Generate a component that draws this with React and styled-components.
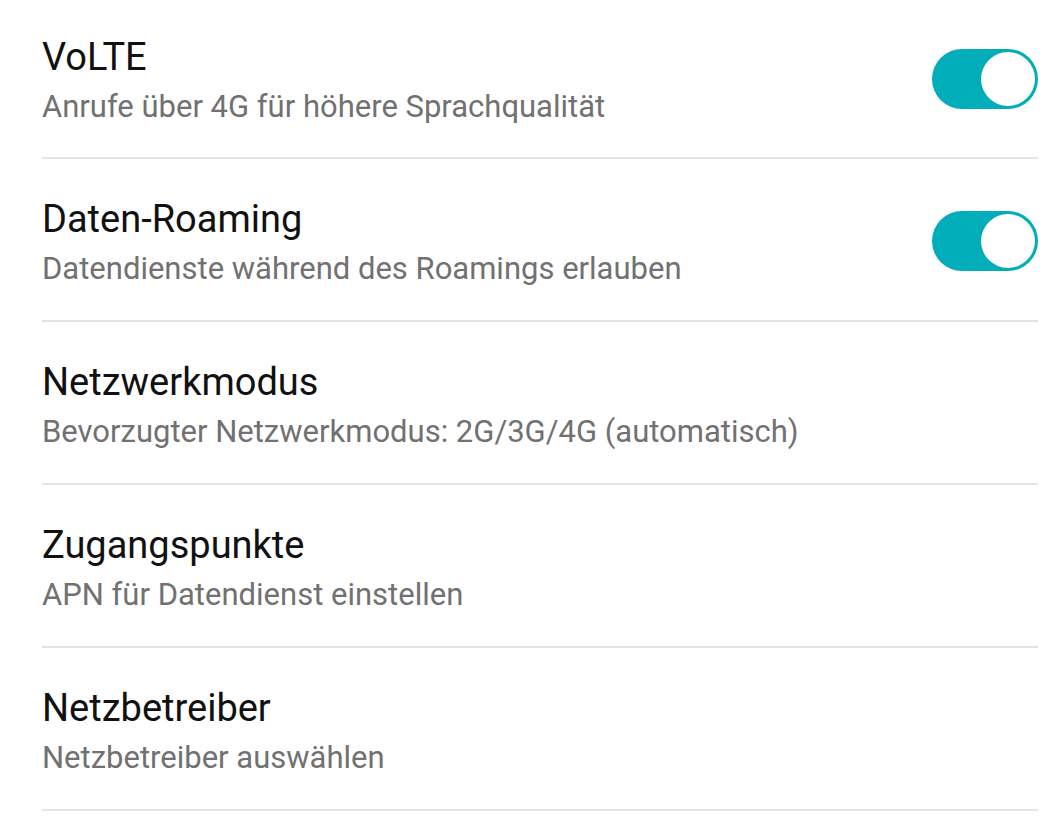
import React from "react";
import styled, { createGlobalStyle } from "styled-components";

const GlobalStyle = createGlobalStyle`
  html, body { margin: 0; padding: 0; background: #ffffff; }
  body { font-family: Roboto, "Noto Sans", "Liberation Sans", sans-serif; }
`;

const List = styled.div`
  display: flex;
  flex-direction: column;
  padding: 0 25px 0 42px;
  background: #ffffff;
`;

const Row = styled.div`
  display: flex;
  align-items: center;
  justify-content: space-between;
  height: 163px;
  box-sizing: border-box;
  border-bottom: 2px solid #e4e4e4;
  padding-top: 3px;
  &:first-child {
    height: 159px;
    padding-top: 0;
  }
`;

const Texts = styled.div`
  display: flex;
  flex-direction: column;
  gap: 8px;
`;

const Title = styled.div`
  font-size: 38px;
  line-height: 48px;
  color: #111111;
  white-space: nowrap;
`;

const Subtitle = styled.div`
  font-size: 31px;
  line-height: 36px;
  color: #717171;
  white-space: nowrap;
`;

const Track = styled.div`
  width: 106px;
  height: 60px;
  border-radius: 30px;
  background: ${(p) => (p.$on ? "#00adb9" : "#bdbdbd")};
  display: flex;
  align-items: center;
  justify-content: ${(p) => (p.$on ? "flex-end" : "flex-start")};
  padding: 0 3px;
  box-sizing: border-box;
  flex-shrink: 0;
`;

const Thumb = styled.div`
  width: 54px;
  height: 54px;
  border-radius: 50%;
  background: #ffffff;
`;

const items = [
  { title: "VoLTE", sub: "Anrufe über 4G für höhere Sprachqualität", toggle: true },
  { title: "Daten-Roaming", sub: "Datendienste während des Roamings erlauben", toggle: true },
  { title: "Netzwerkmodus", sub: "Bevorzugter Netzwerkmodus: 2G/3G/4G (automatisch)" },
  { title: "Zugangspunkte", sub: "APN für Datendienst einstellen" },
  { title: "Netzbetreiber", sub: "Netzbetreiber auswählen" },
];

export default function App() {
  return (
    <>
      <GlobalStyle />
      <List>
        {items.map((it) => (
          <Row key={it.title}>
            <Texts>
              <Title>{it.title}</Title>
              <Subtitle>{it.sub}</Subtitle>
            </Texts>
            {it.toggle && (
              <Track $on>
                <Thumb />
              </Track>
            )}
          </Row>
        ))}
      </List>
    </>
  );
}
